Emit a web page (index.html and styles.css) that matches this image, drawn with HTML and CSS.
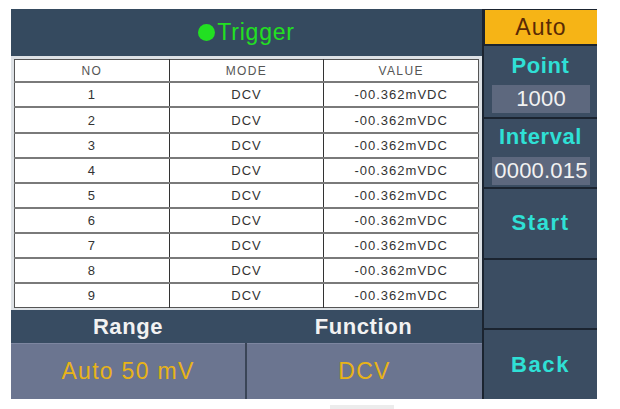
FILE: index.html
```html
<!DOCTYPE html>
<html>
<head>
<meta charset="utf-8">
<link rel="stylesheet" href="styles.css">
</head>
<body>
<div class="screen">
  <div class="main">
    <div class="header"><span class="dot"></span><span class="title">Trigger</span></div>
    <div class="table-wrap">
      <table class="data">
        <tr class="head"><td>NO</td><td>MODE</td><td>VALUE</td></tr>
        <tr><td>1</td><td>DCV</td><td>-00.362mVDC</td></tr>
        <tr><td>2</td><td>DCV</td><td>-00.362mVDC</td></tr>
        <tr><td>3</td><td>DCV</td><td>-00.362mVDC</td></tr>
        <tr><td>4</td><td>DCV</td><td>-00.362mVDC</td></tr>
        <tr><td>5</td><td>DCV</td><td>-00.362mVDC</td></tr>
        <tr><td>6</td><td>DCV</td><td>-00.362mVDC</td></tr>
        <tr><td>7</td><td>DCV</td><td>-00.362mVDC</td></tr>
        <tr><td>8</td><td>DCV</td><td>-00.362mVDC</td></tr>
        <tr><td>9</td><td>DCV</td><td>-00.362mVDC</td></tr>
      </table>
    </div>
    <div class="labels">
      <div class="label">Range</div>
      <div class="label">Function</div>
    </div>
    <div class="values">
      <div class="value">Auto 50 mV</div>
      <div class="value">DCV</div>
    </div>
  </div>
  <div class="side">
    <div class="auto">Auto</div>
    <div class="sec sec-point">
      <div class="cyan">Point</div>
      <div class="box">1000</div>
    </div>
    <div class="sec sec-interval">
      <div class="cyan">Interval</div>
      <div class="box">0000.015</div>
    </div>
    <div class="sec sec-btn"><span class="cyan wide">Start</span></div>
    <div class="sec sec-btn"></div>
    <div class="sec sec-btn"><span class="cyan wide">Back</span></div>
  </div>
</div>
<div class="footbar"></div>
</body>
</html>
```

FILE: styles.css
```css
html, body {
  margin: 0;
  padding: 0;
  background: #ffffff;
  overflow: hidden;
}
body {
  font-family: "Liberation Sans", Arial, sans-serif;
}
.screen {
  margin: 9px 0 0 11px;
  width: 586px;
  height: 390px;
  display: flex;
  background: #1b2430;
}
.main {
  width: 471px;
  display: flex;
  flex-direction: column;
}
.header {
  height: 47px;
  background: #354a5f;
  display: flex;
  align-items: center;
  justify-content: center;
  color: #22e022;
}
.dot {
  width: 17px;
  height: 17px;
  border-radius: 50%;
  background: #22e022;
  margin-right: 2px;
}
.title {
  font-size: 23px;
  letter-spacing: 0.8px;
}
.table-wrap {
  height: 254px;
  box-sizing: border-box;
  padding: 3px 3px 2px 3px;
  background: #dde1e5;
}
.data {
  width: 100%;
  height: 100%;
  border-collapse: collapse;
  background: #ffffff;
  table-layout: fixed;
  border: 1.5px solid #555;
}
.data td {
  border-top: 2px solid #7a7a7a;
  border-left: 1.5px solid #333;
  text-align: center;
  font-size: 13px;
  letter-spacing: 1px;
  color: #333;
  padding: 0;
}
.data td:first-child {
  border-left: none;
}
.data tr.head td {
  border-top: none;
  font-size: 12px;
  letter-spacing: 1.4px;
  color: #555;
}
.labels {
  height: 33px;
  display: grid;
  grid-template-columns: 234px 237px;
  background: #384c62;
}
.label {
  display: flex;
  align-items: center;
  justify-content: center;
  color: #f2f2f2;
  font-size: 22px;
  font-weight: bold;
  letter-spacing: 0.6px;
}
.values {
  height: 56px;
  display: grid;
  grid-template-columns: 234px 235px;
  column-gap: 2px;
  background: #3a4557;
}
.value {
  display: flex;
  align-items: center;
  justify-content: center;
  background: #6b7590;
  border-top: 1px solid #7d86a0;
  color: #e8b318;
  font-size: 23px;
  letter-spacing: 1.3px;
}
.side {
  width: 115px;
  box-sizing: border-box;
  padding: 1px 0 0 2px;
  display: flex;
  flex-direction: column;
  gap: 2px;
}
.auto {
  height: 34px;
  margin-left: 1px;
  background: #f6b416;
  color: #5a2a05;
  font-size: 23px;
  letter-spacing: 1px;
  display: flex;
  align-items: center;
  justify-content: center;
}
.sec {
  background: #3b4d62;
  display: flex;
  flex-direction: column;
  align-items: center;
}
.sec-point {
  height: 71px;
  padding-top: 8px;
  box-sizing: border-box;
}
.sec-interval {
  height: 68px;
  padding-top: 6px;
  box-sizing: border-box;
}
.sec-btn {
  flex: 1;
  justify-content: center;
}
.cyan {
  color: #2fe0d6;
  font-size: 22px;
  font-weight: bold;
  line-height: 24px;
  letter-spacing: 0.6px;
}
.wide {
  letter-spacing: 1.6px;
}
.box {
  align-self: flex-start;
  margin-left: 8px;
  width: 98px;
  height: 28px;
  background: #5d687e;
  color: #f2f2f2;
  font-size: 22px;
  line-height: 28px;
  text-align: center;
  letter-spacing: 0.2px;
}
.sec-point .box {
  margin-top: 7px;
}
.sec-interval .box {
  margin-top: 8px;
}
.footbar {
  margin: 6px 0 0 330px;
  width: 64px;
  height: 5px;
  background: #ececec;
}
```
